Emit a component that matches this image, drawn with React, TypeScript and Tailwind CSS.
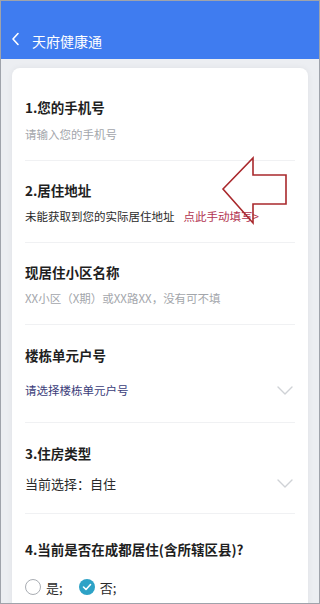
const Chevron = () => (
  <svg width="16" height="9" viewBox="0 0 16 9" fill="none">
    <path d="M1 1l7 7 7-7" stroke="#cfd2d6" strokeWidth="1.4" strokeLinecap="round" strokeLinejoin="round" />
  </svg>
);

const Divider = () => <div className="h-px bg-[#f0f1f3]" />;

const Label = ({ children }: { children: React.ReactNode }) => (
  <div className="text-[13.5px] font-bold leading-none text-[#1f1f1f]">{children}</div>
);

export default function App() {
  return (
    <div
      className="relative h-[604px] w-[320px] overflow-hidden border border-[#9fa3ab] bg-[#eceef2]"
      style={{ fontFamily: '"Noto Sans CJK SC", "Noto Sans", sans-serif' }}
    >
      <div className="flex h-[58px] items-end bg-[#3f7cf0] pb-[11px] pl-[10px]">
        <svg width="10" height="14" viewBox="0 0 10 14" fill="none" className="mb-[2px]">
          <path d="M7 1.5L2 7l5 5.5" stroke="white" strokeWidth="1.6" strokeLinecap="round" strokeLinejoin="round" />
        </svg>
        <span className="ml-[11px] text-[14px] leading-none text-white">天府健康通</span>
      </div>

      <div className="px-[11px] pt-[9px]">
        <div className="rounded-[8px] bg-white px-[13px] shadow-[0_0_6px_rgba(0,0,0,0.06)]">
          <div className="pt-[33px] pb-[20px]">
            <Label>1.您的手机号</Label>
            <div className="mt-[14px] text-[11.5px] leading-none text-[#a3a6ab]">请输入您的手机号</div>
          </div>
          <Divider />
          <div className="pt-[23px] pb-[20px]">
            <Label>2.居住地址</Label>
            <div className="mt-[13px] flex text-[11.5px] leading-none text-[#2a2a2a]">
              <span>未能获取到您的实际居住地址</span>
              <span className="ml-[9px] text-[#b2334f]">点此手动填写&gt;</span>
            </div>
          </div>
          <Divider />
          <div className="pt-[23px] pb-[20px]">
            <Label>现居住小区名称</Label>
            <div className="mt-[13px] text-[11.5px] leading-none text-[#a3a6ab]">XX小区（X期）或XX路XX，没有可不填</div>
          </div>
          <Divider />
          <div className="pt-[24px] pb-[26px]">
            <Label>楼栋单元户号</Label>
            <div className="mt-[22px] flex items-center justify-between pr-[2px]">
              <span className="text-[11.5px] leading-none text-[#3b3d7a]">请选择楼栋单元户号</span>
              <Chevron />
            </div>
          </div>
          <Divider />
          <div className="pt-[24px] pb-[23px]">
            <Label>3.住房类型</Label>
            <div className="mt-[16px] flex items-center justify-between pr-[2px]">
              <span className="text-[13px] leading-none text-[#2a2a2a]">当前选择：自住</span>
              <Chevron />
            </div>
          </div>
          <Divider />
          <div className="pt-[29px] pb-[24px]">
            <Label>4.当前是否在成都居住(含所辖区县)?</Label>
            <div className="mt-[23px] flex items-center text-[13px] leading-none text-[#2a2a2a]">
              <span className="h-[16px] w-[16px] rounded-full border border-[#a9adb3]" />
              <span className="ml-[5px]">是;</span>
              <span className="ml-[16px] flex h-[16px] w-[16px] items-center justify-center rounded-full bg-[#2da2c6]">
                <svg width="10" height="8" viewBox="0 0 10 8" fill="none">
                  <path d="M1.5 4l2.5 2.5L8.5 1.5" stroke="white" strokeWidth="1.6" strokeLinecap="round" strokeLinejoin="round" />
                </svg>
              </span>
              <span className="ml-[5px]">否;</span>
            </div>
          </div>
        </div>
      </div>

      <svg className="absolute left-[218px] top-[154px]" width="72" height="72" viewBox="218 154 72 72" fill="none">
        <path
          d="M222 188L252 157V174H285V203H252V222Z"
          stroke="#a9282c"
          strokeWidth="1.6"
          strokeLinejoin="miter"
        />
      </svg>
    </div>
  );
}
